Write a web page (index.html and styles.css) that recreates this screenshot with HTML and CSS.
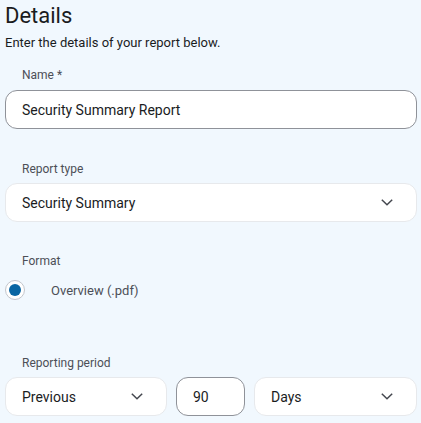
FILE: index.html
```html
<!DOCTYPE html>
<html lang="en">
<head>
<meta charset="utf-8">
<title>Details</title>
<link rel="stylesheet" href="styles.css">
</head>
<body>
<main class="page">
  <h1 class="title">Details</h1>
  <p class="subtitle">Enter the details of your report below.</p>

  <section class="field field-name">
    <label class="label">Name *</label>
    <div class="box box-input">Security Summary Report</div>
  </section>

  <section class="field field-type">
    <label class="label">Report type</label>
    <div class="box box-select">
      <span class="value">Security Summary</span>
      <svg class="chev" viewBox="0 0 12 7" width="12" height="7"><path d="M0.8 0.8 L6 5.8 L11.2 0.8" fill="none" stroke="#44474e" stroke-width="1.5"/></svg>
    </div>
  </section>

  <section class="field field-format">
    <label class="label">Format</label>
    <div class="radio-row">
      <span class="radio"><span class="radio-dot"></span></span>
      <span class="radio-text">Overview (.pdf)</span>
    </div>
  </section>

  <section class="field field-period">
    <label class="label">Reporting period</label>
    <div class="period-row">
      <div class="box box-select period-which">
        <span class="value">Previous</span>
        <svg class="chev" viewBox="0 0 12 7" width="12" height="7"><path d="M0.8 0.8 L6 5.8 L11.2 0.8" fill="none" stroke="#44474e" stroke-width="1.5"/></svg>
      </div>
      <div class="box box-input period-num">90</div>
      <div class="box box-select period-unit">
        <span class="value">Days</span>
        <svg class="chev" viewBox="0 0 12 7" width="12" height="7"><path d="M0.8 0.8 L6 5.8 L11.2 0.8" fill="none" stroke="#44474e" stroke-width="1.5"/></svg>
      </div>
    </div>
  </section>
</main>
</body>
</html>
```

FILE: styles.css
```css
html, body {
  margin: 0;
  padding: 0;
  background: #f1f8fe;
}
body {
  font-family: Roboto, "Liberation Sans", sans-serif;
  color: #1a1c1e;
  width: 421px;
  height: 423px;
  overflow: hidden;
}
.page {
  padding: 3px 4px 0 5px;
  display: flex;
  flex-direction: column;
}
.title {
  margin: 0;
  font-size: 22px;
  font-weight: 400;
  line-height: 26px;
  color: #1a1c1e;
}
.subtitle {
  margin: 6px 0 0 0;
  font-size: 13px;
  line-height: 16px;
  color: #1a1c1e;
}
.field {
  display: flex;
  flex-direction: column;
}
.label {
  display: block;
  font-size: 12px;
  line-height: 16px;
  color: #4c4f57;
  padding-left: 17px;
  margin-bottom: 6px;
}
.field-name { margin-top: 16px; }
.field-name .label { margin-bottom: 7px; }
.field-type { margin-top: 32px; }
.field-format { margin-top: 31px; }
.field-period { margin-top: 50px; }

.box {
  box-sizing: border-box;
  height: 39px;
  border-radius: 12px;
  background: #ffffff;
  display: flex;
  align-items: center;
  padding: 0 16px;
  font-size: 14px;
  color: #1a1c1e;
}
.box-input {
  border: 1px solid #8f9299;
}
.box-select {
  border: 1px solid #e7e9ec;
  justify-content: space-between;
  padding-right: 23px;
}
.chev {
  display: block;
}
.radio-row {
  display: flex;
  align-items: center;
  height: 30px;
  margin-top: 0;
}
.radio {
  box-sizing: border-box;
  width: 20px;
  height: 20px;
  border-radius: 50%;
  border: 1.5px solid #c3c6cc;
  background: #ffffff;
  display: flex;
  align-items: center;
  justify-content: center;
}
.radio-dot {
  width: 12px;
  height: 12px;
  border-radius: 50%;
  background: #0a66a3;
}
.radio-text {
  margin-left: 26px;
  font-size: 13px;
  color: #4c4f57;
}
.period-row {
  display: flex;
  gap: 9px;
}
.period-which { width: 162px; }
.period-num { width: 69px; }
.period-unit { flex: 1; }
```
